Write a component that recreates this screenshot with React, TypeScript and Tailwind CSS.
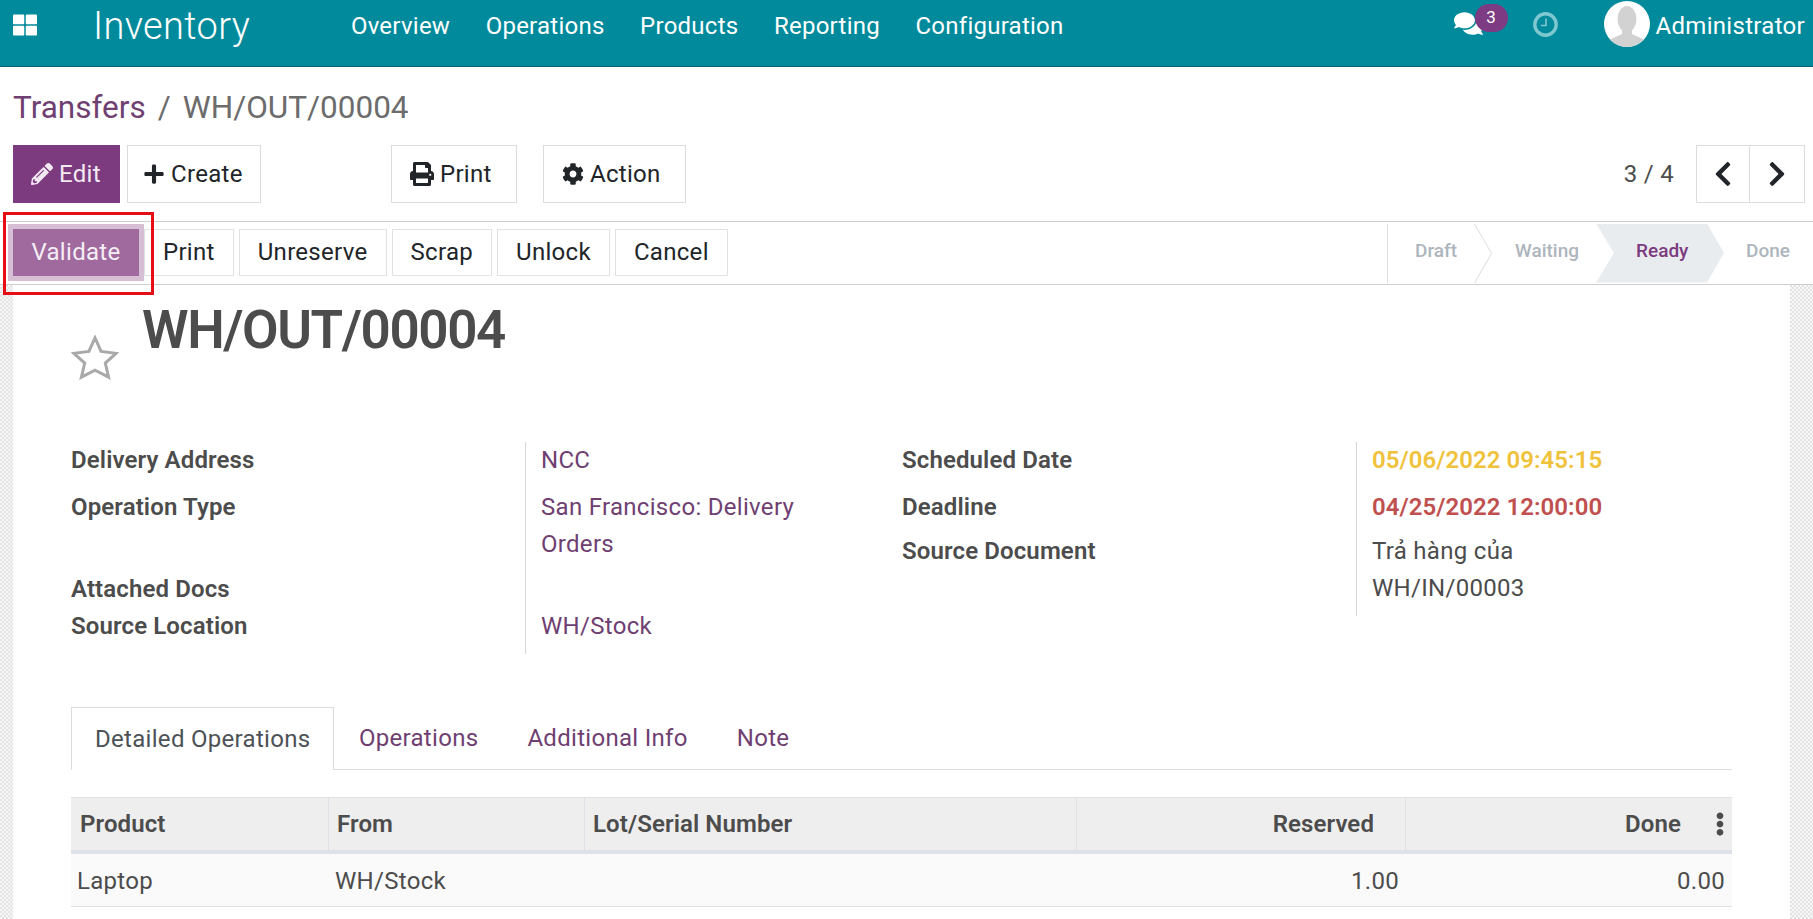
import { FaThLarge, FaPencilAlt, FaPlus, FaPrint, FaCog, FaChevronLeft, FaChevronRight, FaComments, FaEllipsisV } from "react-icons/fa";

const navItems = ["Overview", "Operations", "Products", "Reporting", "Configuration"];
const statusButtons = ["Print", "Unreserve", "Scrap", "Unlock", "Cancel"];

function Navbar() {
  return (
    <header className="flex h-[67px] items-center border-b border-[#00626e] bg-[#018a9b] pb-[18px] pl-[13px] pr-2 text-white">
      <FaThLarge className="mt-[2px] h-[24px] w-[24px] shrink-0" />
      <span className="ml-[56px] mt-[3px] text-[38px] leading-[42px] font-light tracking-[0.35px]">Inventory</span>
      <nav className="ml-[83px] mt-[3px] flex text-[24px] leading-[30px] tracking-[0.25px]">
        {navItems.map((item) => (
          <a key={item} className="px-[17.75px]">{item}</a>
        ))}
      </nav>
      <div className="ml-auto flex items-center">
        <div className="relative mr-[51px] h-[24px] w-[28px]">
          <FaComments className="h-[27px] w-[29px] -translate-y-[2px]" />
          <span className="absolute -top-[8px] left-[21px] flex h-[28px] w-[33px] items-center justify-center rounded-full bg-[#7c3b82] text-[17px] font-normal text-white">3</span>
        </div>
        <svg viewBox="0 0 25 25" className="h-[25px] w-[25px]" fill="none" stroke="#7fc8d1">
          <circle cx="12.5" cy="12.5" r="10.7" strokeWidth="3.4" />
          <path d="M13 6.5v7H8" strokeWidth="1.6" />
        </svg>
        <svg viewBox="0 0 46 46" className="ml-[46px] h-[46px] w-[46px]">
          <defs>
            <clipPath id="avatar-clip">
              <circle cx="23" cy="23" r="23" />
            </clipPath>
          </defs>
          <circle cx="23" cy="23" r="23" fill="#ffffff" />
          <g clipPath="url(#avatar-clip)" fill="#d2d2d2">
            <ellipse cx="23" cy="18" rx="9.5" ry="13" />
            <path d="M18 27h10v6l11 5c2 1 3 4 3 8H4c0-4 1-7 3-8l11-5z" />
          </g>
        </svg>
        <span className="ml-[6px] mt-[3px] text-[24px] leading-[30px] tracking-[0.3px]">Administrator</span>
      </div>
    </header>
  );
}

function ControlPanel() {
  return (
    <div className="pb-[18px] pl-[13px] pr-[8px]">
      <div className="flex h-[78px] items-end pb-[19px] text-[31.5px] leading-[36px] text-[#6c6c6c]">
        <a className="text-[#6f3f72]">Transfers</a>
        <span className="ml-[12px]">/</span>
        <span className="ml-[12px]">WH/OUT/00004</span>
      </div>
      <div className="flex items-start text-[24px] tracking-[0.3px] text-[#212529]">
        <button className="flex h-[58px] w-[107px] items-center bg-[#7c3b7f] pl-[18px] text-[#f3e9f3]">
          <FaPencilAlt className="h-[22px] w-[22px]" />
          <span className="ml-[6px]">Edit</span>
        </button>
        <button className="ml-[7px] flex h-[58px] w-[134px] items-center border border-[#dcdcdc] pl-[15px]">
          <FaPlus className="h-[22px] w-[22px]" />
          <span className="ml-[6px]">Create</span>
        </button>
        <button className="ml-[130px] flex h-[58px] w-[126px] items-center border border-[#dcdcdc] pl-[18px]">
          <FaPrint className="h-[24px] w-[24px]" />
          <span className="ml-[6px]">Print</span>
        </button>
        <button className="ml-[26px] flex h-[58px] w-[143px] items-center border border-[#dcdcdc] pl-[18px]">
          <FaCog className="h-[22px] w-[22px]" />
          <span className="ml-[6px]">Action</span>
        </button>
        <span className="ml-auto mr-[22px] self-center text-[#4c4c4c]">3 / 4</span>
        <div className="flex h-[58px] border border-[#dcdcdc]">
          <button className="flex w-[53px] items-center justify-center border-r border-[#dcdcdc]">
            <FaChevronLeft className="h-[28px] w-[28px]" />
          </button>
          <button className="flex w-[54px] items-center justify-center">
            <FaChevronRight className="h-[28px] w-[28px]" />
          </button>
        </div>
      </div>
    </div>
  );
}

function StatusBar() {
  return (
    <div className="relative flex h-[64px] items-center justify-between border-y border-[#cfcfcf] pl-[13px] pr-[21px]">
      <div className="mb-[2px] flex gap-[5px] text-[24px] tracking-[0.3px] text-[#212529]">
        <button className="h-[47px] w-[126px] bg-[#a06a9f] text-[#f5eef5] outline-[5px] outline-[#d6bfd5]">Validate</button>
        {statusButtons.map((label) => (
          <button key={label} className="h-[47px] border border-[#e2e2e2] px-[18px]">{label}</button>
        ))}
      </div>
      <div className="flex h-[59px] border-l border-[#e0e0e0] pb-[3px] text-[19px] font-medium text-[#adb5bd]">
        <div className="relative flex w-[104px] items-center pl-[27px]">
          Draft
          <svg viewBox="0 0 18 59" className="absolute right-0 top-0 h-[59px] w-[18px]" fill="none" stroke="#dadde0">
            <path d="M0.5 0l17 29.5-17 29.5" />
          </svg>
        </div>
        <div className="flex w-[104px] items-center pl-[23px]">Waiting</div>
        <div className="-mb-[3px] flex w-[128px] items-center bg-[#e9ecef] pb-[3px] pl-[40px] text-[#7c3b7f] [clip-path:polygon(0_0,111px_0,128px_50%,111px_100%,0_100%,18px_50%)]">Ready</div>
        <div className="flex w-[68px] items-center pl-[22px]">Done</div>
      </div>
      <div className="pointer-events-none absolute left-[3px] top-[-10px] h-[83px] w-[151px] border-[3px] border-[#e60d14]" />
    </div>
  );
}

function Row({ label, className, children }: { label?: string; className: string; children?: React.ReactNode }) {
  return (
    <div className={`flex ${className}`}>
      <div className="w-[454px] shrink-0 text-[24px] leading-[37px] font-semibold tracking-[0.12px] text-[#4c4c4c]">{label}</div>
      <div className="flex-1 border-l border-[#d8d8d8] pl-[15px] text-[24px] leading-[37px] tracking-[0.3px]">{children}</div>
    </div>
  );
}

function Sheet() {
  return (
    <div className="flex flex-1 overflow-hidden bg-[repeating-conic-gradient(#e3e3e3_0_25%,#f7f7f7_0_50%)] bg-[length:4px_4px] pl-[13px] pr-[23px]">
      <div className="flex-1 bg-white px-[58px]">
        <div className="flex h-[157px] items-start">
          <svg viewBox="-2 -2 51 48" className="mt-[50px] h-[45px] w-[48px]" fill="none" stroke="#a9a9a9" strokeWidth="3.2" strokeLinejoin="miter">
            <polygon points="23.5,1 30,15.5 46,17.5 34.5,28 38,43 23.5,35.5 9,43 12.5,28 1,17.5 17,15.5" />
          </svg>
          <h1 className="ml-[23px] mt-[15px] text-[53px] leading-[60px] font-semibold tracking-[-1.4px] text-[#4c4c4c]">WH/OUT/00004</h1>
        </div>

        <div className="flex items-start">
          <div className="w-[831px] shrink-0">
            <Row label="Delivery Address" className="h-[47px]"><a className="text-[#6f3f72]">NCC</a></Row>
            <Row label="Operation Type" className="h-[82px]"><a className="block w-[290px] text-[#6f3f72]">San Francisco: Delivery Orders</a></Row>
            <Row label="Attached Docs" className="h-[37px]" />
            <Row label="Source Location" className="h-[46px]"><a className="text-[#6f3f72]">WH/Stock</a></Row>
          </div>
          <div className="flex-1">
            <Row label="Scheduled Date" className="h-[47px]"><span className="font-semibold tracking-[0.05px] text-[#f0c23c]">05/06/2022 09:45:15</span></Row>
            <Row label="Deadline" className="h-[44px]"><span className="font-semibold tracking-[0.05px] text-[#c0504f]">04/25/2022 12:00:00</span></Row>
            <Row label="Source Document" className="h-[83px]"><span className="block w-[190px] text-[#4c4c4c]">Trả hàng của WH/IN/00003</span></Row>
          </div>
        </div>

        <div className="mt-[53px] flex h-[63px] border-b border-[#dcdcdc] text-[24px] tracking-[0.3px] text-[#6f3f72]">
          <a className="-mb-px flex items-center border border-b-0 border-[#dcdcdc] bg-white px-[23px] text-[#4c5257]">Detailed Operations</a>
          <a className="flex items-center px-[24.5px]">Operations</a>
          <a className="flex items-center px-[24.5px]">Additional Info</a>
          <a className="flex items-center px-[24.5px]">Note</a>
        </div>

        <div className="mt-[27px] text-[24px] text-[#4c4c4c]">
          <div className="grid h-[57px] grid-cols-[258px_256px_492px_329px_326px] border-t border-b-[4px] border-[#dee2e6] bg-[#eeeeee] font-semibold tracking-[0.1px]">
            <div className="flex items-center border-r border-[#dee2e6] pl-[9px]">Product</div>
            <div className="flex items-center border-r border-[#dee2e6] pl-[8px]">From</div>
            <div className="flex items-center border-r border-[#dee2e6] pl-[8px]">Lot/Serial Number</div>
            <div className="flex items-center justify-end border-r border-[#dee2e6] pr-[31px]">Reserved</div>
            <div className="flex items-center justify-end">
              Done
              <FaEllipsisV className="ml-[27px] h-[24px] w-[24px]" />
            </div>
          </div>
          <div className="grid h-[53px] grid-cols-[258px_256px_492px_329px_326px] items-center border-b border-[#dee2e6] bg-[#fafafa] pt-[1px] tracking-[0.3px]">
            <div className="pl-[6px]">Laptop</div>
            <div className="pl-[6px]">WH/Stock</div>
            <div />
            <div className="pr-[7px] text-right">1.00</div>
            <div className="pr-[7px] text-right">0.00</div>
          </div>
        </div>
      </div>
    </div>
  );
}

export default function App() {
  return (
    <div className="flex h-[919px] flex-col overflow-hidden bg-white font-['Roboto',sans-serif]">
      <Navbar />
      <ControlPanel />
      <StatusBar />
      <Sheet />
    </div>
  );
}
